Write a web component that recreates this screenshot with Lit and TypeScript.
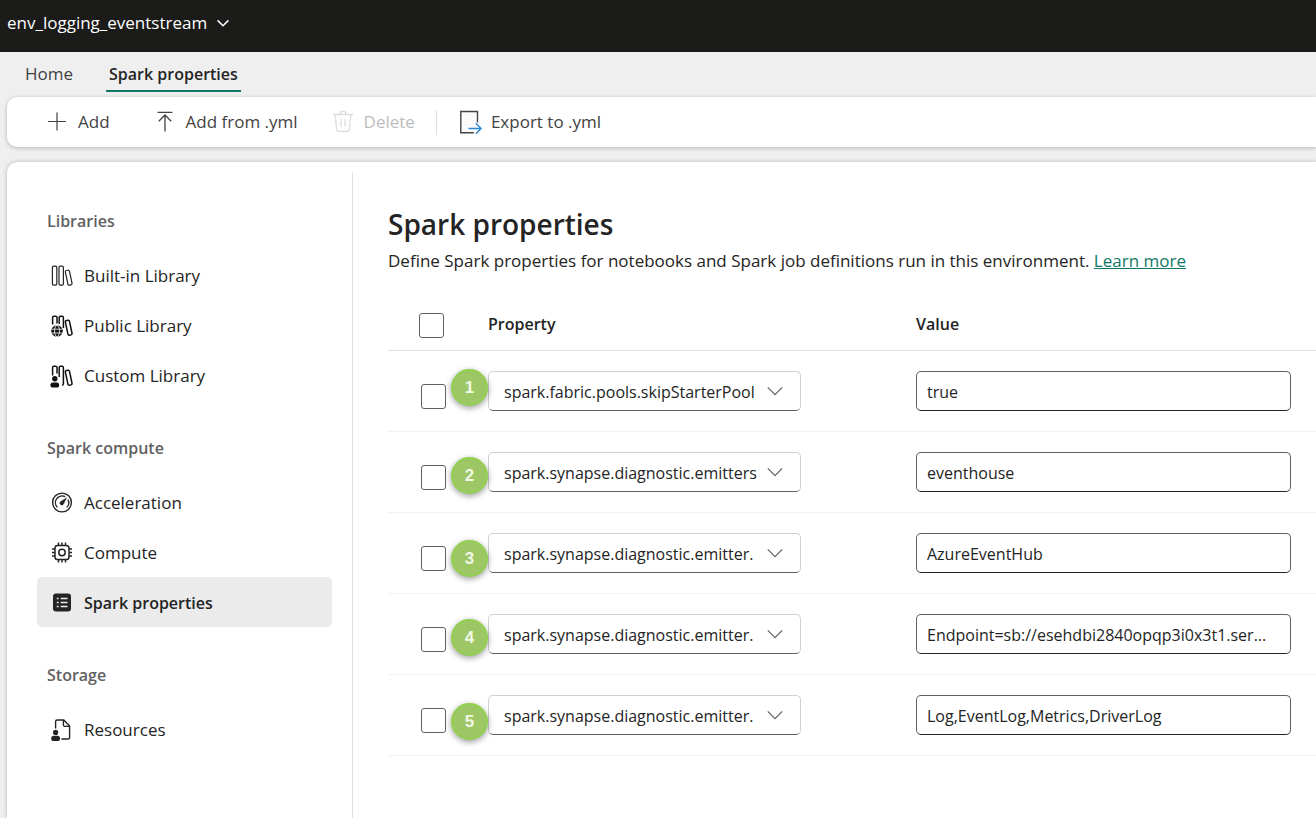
import { LitElement, html, css, svg } from "lit";
import { customElement } from "lit/decorators.js";
import { classMap } from "lit/directives/class-map.js";
import { styleMap } from "lit/directives/style-map.js";

const icons: Record<string, unknown> = {
  builtin: svg`<svg viewBox="0 0 24 24"><g stroke-width="1.2"><rect x="2.4" y="2.2" width="4.4" height="19" rx="1.4"/><rect x="9" y="2.2" width="4.4" height="19" rx="1.4"/><rect x="16.6" y="6.2" width="4.2" height="15" rx="1.4" transform="rotate(-12 18.7 13.7)"/></g></svg>`,
  public: svg`<svg viewBox="0 0 24 24"><g stroke-width="1.5" stroke="#111"><path d="M2.6 10.5V3.6q0-1.4 1.4-1.4h1.6q1.4 0 1.4 1.4v6M9.2 10V3.6q0-1.4 1.4-1.4h1.4q1.4 0 1.4 1.4V14"/><rect x="16.6" y="6.2" width="4.2" height="15" rx="1.4" transform="rotate(-12 18.7 13.7)"/></g><circle cx="7" cy="17" r="5.8" fill="#111" stroke="none"/><path d="M1.4 15.2h11.2M1.4 19h11.2" stroke="#fff" stroke-width=".8"/><ellipse cx="7" cy="17" rx="2.5" ry="5.6" stroke="#fff" stroke-width=".8"/></svg>`,
  custom: svg`<svg viewBox="0 0 24 24"><g stroke-width="1.5" stroke="#111"><path d="M2.6 11.5V3.6q0-1.4 1.4-1.4h1.6q1.4 0 1.4 1.4v6M9.2 13V3.6q0-1.4 1.4-1.4h1.4q1.4 0 1.4 1.4v16.2q0 1.4-1.4 1.4"/><rect x="16.6" y="6.2" width="4.2" height="15" rx="1.4" transform="rotate(-12 18.7 13.7)"/></g><g fill="#111" stroke="none"><circle cx="4.8" cy="14.8" r="2.7"/><rect x=".4" y="18.4" width="8.8" height="5.2" rx="2.6"/></g></svg>`,
  gauge: svg`<svg viewBox="0 0 24 24"><circle cx="12" cy="11.5" r="9.4" stroke-width="1.4"/><path d="M7.4 16.4A6.7 6.7 0 0 1 15.2 5.7M18 8.6a6.7 6.7 0 0 1-1.3 7.8" stroke-width="1.3"/><path d="M16.6 6.8l-3.1 6.2a1.9 1.9 0 1 1-2.7-2.5z" fill="currentColor" stroke-width=".4"/></svg>`,
  chip: svg`<svg viewBox="0 0 24 24"><g stroke-width="1.5"><rect x="5" y="4.5" width="14" height="14" rx="2.6"/><circle cx="12" cy="11.5" r="3.2"/><path d="M8.5 1.5v3M12 1.5v3M15.5 1.5v3M8.5 18.5v3M12 18.5v3M15.5 18.5v3M2 8h3M2 11.5h3M2 15h3M19 8h3M19 11.5h3M19 15h3"/></g></svg>`,
  list: svg`<svg viewBox="0 0 24 24"><rect x="3" y="2.5" width="18" height="18" rx="3" fill="currentColor" stroke="none"/><path d="M6.8 7.5h1.8M6.8 11.5h1.8M6.8 15.5h1.8M10.7 7.5h6.8M10.7 11.5h6.8M10.7 15.5h6.8" stroke="#ebebeb" stroke-width="1.4"/></svg>`,
  resources: svg`<svg viewBox="0 0 24 24"><path d="M5.6 10.5V3.6q0-1.6 1.6-1.6h6.6L19.6 8v11.4q0 1.6-1.6 1.6h-6.6M13.4 2.2v4.6q0 1.6 1.6 1.6h4.4" stroke-width="1.4"/><g fill="currentColor" stroke="none"><circle cx="5.6" cy="14.4" r="2.6"/><rect x="1.2" y="17.8" width="8.8" height="5.2" rx="2.6"/></g></svg>`,
  plus: svg`<svg viewBox="0 0 24 24"><path d="M12 2.5v18M3 11.5h18" stroke-width="1.2"/></svg>`,
  upload: svg`<svg viewBox="0 0 24 24"><path d="M4.5 2.3h15M12 5v16.5M5.8 11.2L12 5l6.2 6.2" stroke-width="1.3"/></svg>`,
  trash: svg`<svg viewBox="0 0 24 24"><path d="M2 4.5h20M9 4.3q0-3 3-3t3 3M4.2 4.7l1.5 15q.2 1.6 1.8 1.6h9q1.6 0 1.8-1.6l1.5-15M10 8.7v8M14 8.7v8" stroke-width="1.3"/></svg>`,
  exportFile: svg`<svg viewBox="0 0 24 24"><path d="M19.5 12.5V1.5H2.8v21.2h13" fill="#fafafa" stroke-width="1.4"/><path d="M10.5 18.5h12.3M17.8 13.2l5.3 5.3-5.3 5.3" stroke="#2b88d8" stroke-width="1.4"/></svg>`,
  chevron: svg`<svg viewBox="0 0 16 16"><path d="M.8 4.4L8 11.6l7.2-7.2" stroke-width="1.2"/></svg>`,
  chevronBold: svg`<svg viewBox="0 0 12 12"><path d="M.6 3.4L6 8.8l5.4-5.4" stroke-width="1.5"/></svg>`,
};

interface NavItem {
  label: string;
  icon: string;
  selected?: boolean;
}

const sections: { title: string; items: NavItem[] }[] = [
  {
    title: "Libraries",
    items: [
      { label: "Built-in Library", icon: "builtin" },
      { label: "Public Library", icon: "public" },
      { label: "Custom Library", icon: "custom" },
    ],
  },
  {
    title: "Spark compute",
    items: [
      { label: "Acceleration", icon: "gauge" },
      { label: "Compute", icon: "chip" },
      { label: "Spark properties", icon: "list", selected: true },
    ],
  },
  { title: "Storage", items: [{ label: "Resources", icon: "resources" }] },
];

const rows = [
  { property: "spark.fabric.pools.skipStarterPool", value: "true" },
  { property: "spark.synapse.diagnostic.emitters", value: "eventhouse" },
  { property: "spark.synapse.diagnostic.emitter.", value: "AzureEventHub" },
  { property: "spark.synapse.diagnostic.emitter.", value: "Endpoint=sb://esehdbi2840opqp3i0x3t1.ser..." },
  { property: "spark.synapse.diagnostic.emitter.", value: "Log,EventLog,Metrics,DriverLog" },
];

/* Vertical centre of each numbered callout, measured from the top of the table. */
const callouts = [85, 173, 256, 335, 419];

@customElement("app-root")
export class AppRoot extends LitElement {
  static styles = css`
    :host {
      display: flex;
      flex-direction: column;
      min-height: 100vh;
      background: #efefef;
      color: #242424;
      font-family: "Open Sans", "Noto Sans", sans-serif;
      font-size: 17px;
      line-height: 24px;
      overflow-x: hidden;
    }
    * {
      box-sizing: border-box;
    }
    button,
    input,
    select {
      font: inherit;
      color: inherit;
      margin: 0;
    }
    button {
      border: 0;
      padding: 0;
      background: none;
      display: flex;
      align-items: center;
    }
    svg {
      display: block;
      width: 100%;
      height: 100%;
      fill: none;
      stroke: currentColor;
    }
    .icon {
      flex: none;
      width: 24px;
      height: 24px;
    }
    .topbar {
      display: flex;
      align-items: center;
      height: 52px;
      padding: 0 7px 6px;
      background: #1b1b1a;
      color: #fff;
    }
    .title {
      gap: 10px;
    }
    .small {
      flex: none;
      width: 12px;
      height: 12px;
    }
    .tabs {
      display: flex;
      gap: 30px;
      height: 45px;
      padding: 0 22px 5px;
    }
    .tab {
      padding: 5px 3px 0;
      border-bottom: 2px solid transparent;
      color: #424242;
    }
    .tab.active {
      border-color: #117865;
      color: #242424;
      font-size: 16px;
      font-weight: 600;
    }
    .toolbar {
      display: flex;
      align-items: center;
      height: 50px;
      margin-left: 7px;
      padding-left: 38px;
      background: #fff;
      border-radius: 10px 0 0 10px;
      box-shadow: 0 1px 4px rgba(0, 0, 0, 0.24);
      color: #424242;
    }
    .tool {
      gap: 9px;
    }
    .tools {
      display: flex;
      gap: 33px;
      padding-right: 21px;
      margin-right: 21px;
    }
    .tool.primary {
      padding-right: 10px;
    }
    .tool.disabled {
      color: #bdbdbd;
    }
    .tool.disabled .icon {
      color: #dcdcdc;
    }
    .separator {
      width: 1px;
      height: 25px;
      margin: 0 21px;
      background: #e0e0e0;
    }
    .tools {
      padding: 0;
      margin: 0;
    }
    .card {
      flex: 1;
      display: flex;
      margin: 15px 0 0 7px;
      padding-top: 10px;
      background: #fff;
      border-radius: 10px 0 0 0;
      box-shadow: 0 0 4px rgba(0, 0, 0, 0.24);
    }
    .sidebar {
      flex: none;
      display: flex;
      flex-direction: column;
      gap: 19px;
      width: 346px;
      padding: 20px 20px 20px 30px;
      border-right: 1px solid #e0e0e0;
    }
    .group {
      margin: 0;
      padding: 0 10px;
      font-size: 16px;
      line-height: 58px;
      font-weight: 600;
      color: #616161;
    }
    .item {
      width: 100%;
      height: 50px;
      gap: 10px;
      padding: 1px 13px 0;
      border-radius: 5px;
    }
    .item.selected {
      background: #ebebeb;
      font-size: 16px;
      font-weight: 600;
    }
    .main {
      flex: 1;
      min-width: 0;
      padding: 32px 0 32px 35px;
    }
    .heading {
      margin: 0;
      font-size: 28px;
      line-height: 40px;
      font-weight: 600;
    }
    .lead {
      margin: 0 0 24px;
      line-height: 34px;
    }
    .link {
      color: #117865;
    }
    .table-wrap {
      position: relative;
      font-size: 16px;
    }
    .table {
      width: 100%;
      table-layout: fixed;
      border-collapse: collapse;
      text-align: left;
    }
    .col-check {
      width: 100px;
    }
    .col-property {
      width: 428px;
    }
    th {
      height: 48px;
      padding: 0 0 4px;
      font-weight: 600;
      border-bottom: 1px solid #e0e0e0;
    }
    td {
      height: 81px;
      padding: 0;
      border-bottom: 1px solid #f3f3f3;
    }
    .head-cell {
      padding: 0 0 0 31px;
    }
    .check-cell {
      padding: 12px 0 0 33px;
    }
    .check {
      appearance: none;
      display: block;
      width: 25px;
      height: 25px;
      border: 1px solid #616161;
      border-radius: 3px;
      background: #fff;
    }
    .picker {
      position: relative;
      width: 313px;
    }
    .select {
      appearance: none;
      display: block;
      width: 100%;
      height: 40px;
      padding: 2px 43px 0 15px;
      border: 1px solid #d1d1d1;
      border-bottom-color: #616161;
      border-radius: 5px;
      background: #fff;
    }
    .arrow {
      position: absolute;
      right: 18px;
      top: 12px;
      width: 16px;
      height: 16px;
      color: #616161;
      pointer-events: none;
    }
    .value-cell {
      padding-right: 25px;
    }
    .input {
      display: block;
      width: 100%;
      height: 40px;
      padding: 2px 10px 0;
      border: 1px solid #616161;
      border-bottom-color: #242424;
      border-radius: 5px;
      background: #fff;
      text-overflow: ellipsis;
    }
    .callout {
      position: absolute;
      left: 63px;
      width: 37px;
      height: 37px;
      margin-top: -18px;
      border: 2px solid #92d050;
      border-radius: 50%;
      background: #9dc765;
      box-shadow: 0 2px 6px rgba(0, 0, 0, 0.4);
      color: #f1f8e6;
      font-family: "Liberation Sans", sans-serif;
      font-size: 17px;
      line-height: 33px;
      font-weight: 700;
      text-align: center;
    }
  `;

  private icon(name: string, size = "icon") {
    return html`<span class=${size} aria-hidden="true">${icons[name]}</span>`;
  }

  render() {
    return html`
      <header class="topbar">
        <button class="title">env_logging_eventstream ${this.icon("chevronBold", "small")}</button>
      </header>
      <nav class="tabs">
        <button class="tab">Home</button>
        <button class="tab active">Spark properties</button>
      </nav>
      <div class="toolbar">
        <div class="tools">
          <button class="tool primary">${this.icon("plus")}Add</button>
          <button class="tool">${this.icon("upload")}Add from .yml</button>
          <button class="tool disabled" disabled>${this.icon("trash")}Delete</button>
        </div>
        <span class="separator"></span>
        <button class="tool">${this.icon("exportFile")}Export to .yml</button>
      </div>
      <div class="card">
        <nav class="sidebar">
          ${sections.map(
            (section) => html`<section>
              <h2 class="group">${section.title}</h2>
              ${section.items.map(
                (item) => html`<button class=${classMap({ item: true, selected: !!item.selected })}>
                  ${this.icon(item.icon)}${item.label}
                </button>`
              )}
            </section>`
          )}
        </nav>
        <main class="main">
          <h1 class="heading">Spark properties</h1>
          <p class="lead">
            Define Spark properties for notebooks and Spark job definitions run in this environment.
            <a class="link" href="#">Learn more</a>
          </p>
          <div class="table-wrap">
            <table class="table">
              <colgroup>
                <col class="col-check" />
                <col class="col-property" />
                <col />
              </colgroup>
              <thead>
                <tr>
                  <th class="head-cell"><input class="check" type="checkbox" aria-label="Select all rows" /></th>
                  <th>Property</th>
                  <th>Value</th>
                </tr>
              </thead>
              <tbody>
                ${rows.map(
                  (row, i) => html`<tr>
                    <td class="check-cell"><input class="check" type="checkbox" aria-label="Select row ${i + 1}" /></td>
                    <td>
                      <div class="picker">
                        <select class="select" aria-label="Property ${i + 1}">
                          <option>${row.property}</option>
                        </select>
                        ${this.icon("chevron", "arrow")}
                      </div>
                    </td>
                    <td class="value-cell"><input class="input" type="text" aria-label="Value ${i + 1}" .value=${row.value} /></td>
                  </tr>`
                )}
              </tbody>
            </table>
            ${callouts.map(
              (y, i) => html`<span class="callout" style=${styleMap({ top: `${y}px` })}>${i + 1}</span>`
            )}
          </div>
        </main>
      </div>
    `;
  }
}
